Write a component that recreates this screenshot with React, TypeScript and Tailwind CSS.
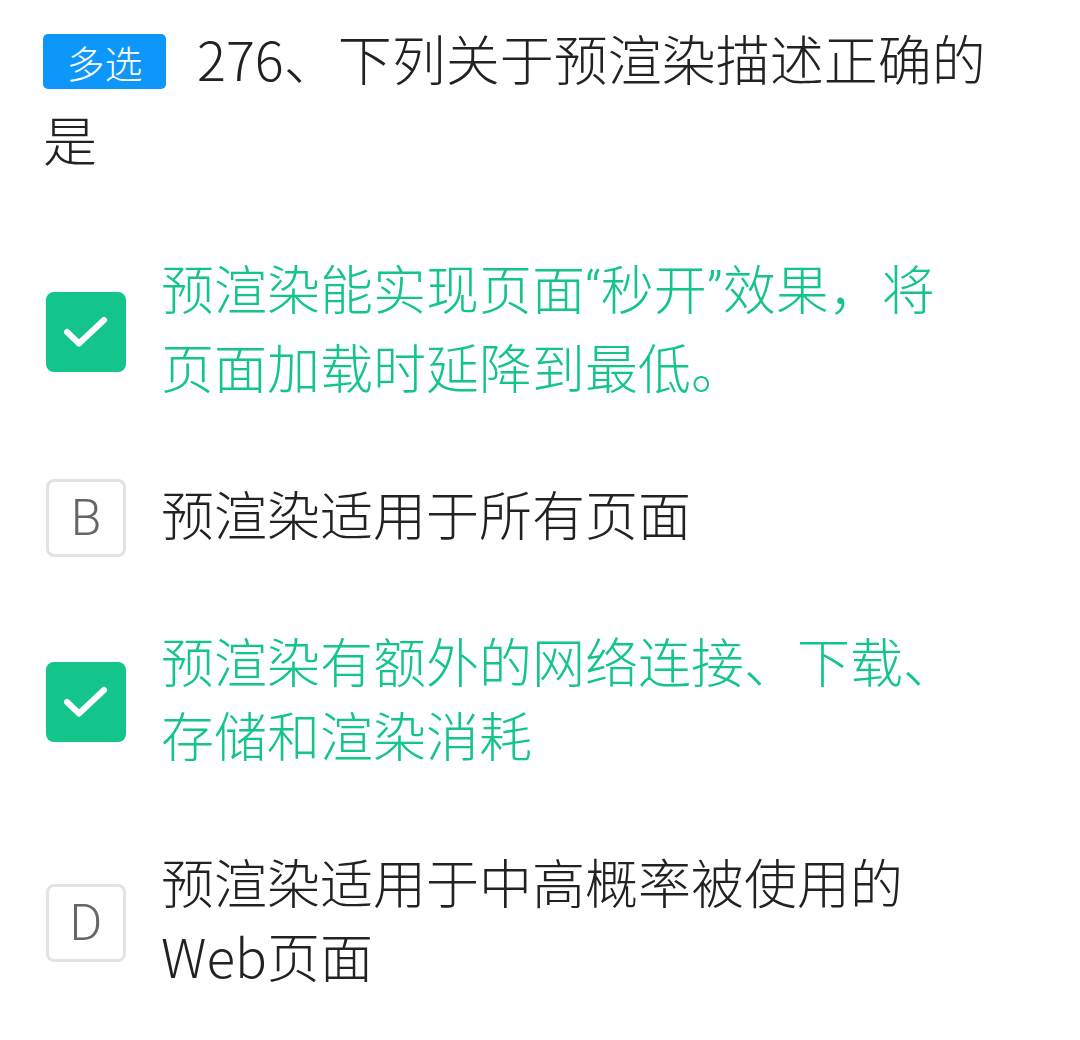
import React from "react";

const font = { fontFamily: '"Noto Sans CJK SC", "Noto Sans", sans-serif' };
const latin = { fontFamily: 'Roboto, "Noto Sans", sans-serif' };

function Check() {
  return (
    <div className="w-[80px] h-[80px] shrink-0 rounded-[8px] bg-[#13c48b] flex items-center justify-center">
      <svg width="80" height="80" viewBox="0 0 80 80" fill="none">
        <path d="M21 40 L33 51.5 L58 28" stroke="white" strokeWidth="6" strokeLinecap="round" strokeLinejoin="round" />
      </svg>
    </div>
  );
}

function Letter({ l }: { l: string }) {
  return (
    <div
      className="w-[80px] h-[78px] shrink-0 rounded-[8px] border-[3px] border-[#e3e3e3] bg-white flex items-center justify-center text-[50px] font-light text-[#666]"
      style={latin}
    >
      {l}
    </div>
  );
}

function Option({ checked, letter, children }: { checked: boolean; letter: string; children: React.ReactNode }) {
  return (
    <div className="flex items-center">
      <div className="w-[116px] pl-[3px] shrink-0">{checked ? <Check /> : <Letter l={letter} />}</div>
      <div
        className={
          "w-[820px] pl-[2px] pb-[10px] text-[53px] leading-[74px] font-light " + (checked ? "text-[#13c48b]" : "text-[#222]")
        }
      >
        {children}
      </div>
    </div>
  );
}

export default function App() {
  return (
    <div className="w-[1080px] h-[1040px] bg-white overflow-hidden" style={font}>
      <div className="pl-[43px] pr-[60px] pt-[17px]">
        <div className="text-[54px] leading-[81px] text-[#222] font-light">
          <span className="inline-flex items-center justify-center align-top mt-[17px] w-[123px] h-[55px] rounded-[5px] bg-[#0d97fb] text-white text-[38px] leading-none mr-[31px]">
            多选
          </span>
          276、下列关于预渲染描述正确的是
        </div>
        <div className="mt-[71px] flex flex-col gap-[63px]">
          <Option checked letter="A">
            预渲染能实现页面<span style={latin}>“</span>秒开<span style={latin}>”</span>效果，将页面加载时延降到最低。
          </Option>
          <Option checked={false} letter="B">
            预渲染适用于所有页面
          </Option>
          <Option checked letter="C">
            预渲染有额外的网络连接、下载、存储和渲染消耗
          </Option>
          <Option checked={false} letter="D">
            预渲染适用于中高概率被使用的Web页面
          </Option>
        </div>
      </div>
    </div>
  );
}
